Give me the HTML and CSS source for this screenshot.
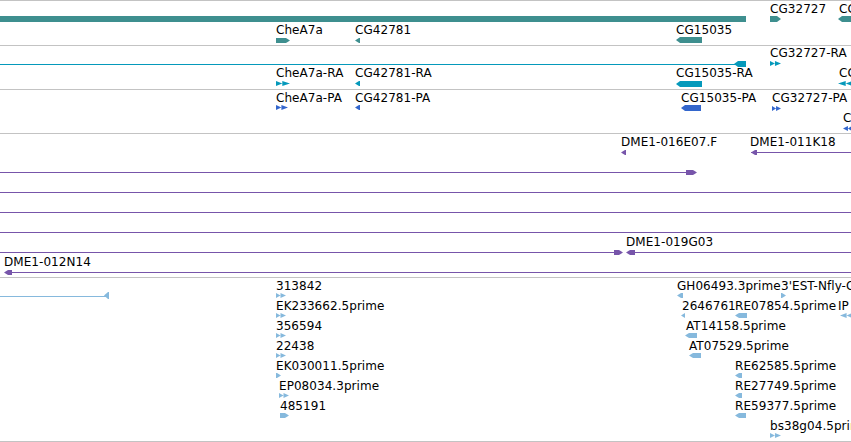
FILE: index.html
```html
<!DOCTYPE html>
<html lang="en">
<head>
  <meta charset="UTF-8">
  <title>Genome view</title>
  <link rel="stylesheet" href="styles.css">
</head>
<body>
<div class="view">

  <!-- genes -->
  <div class="track genes" style="height:44px">
    <div class="g flat" style="left:0;top:15px;width:746px;height:6px"></div>
    <span class="lbl" style="left:276px;top:22px">CheA7a</span>
    <div class="g fwd" style="left:276px;top:37px;width:14px"></div>
    <span class="lbl" style="left:355px;top:22px">CG42781</span>
    <div class="g rev" style="left:355px;top:37px;width:5px"></div>
    <span class="lbl" style="left:676px;top:22px">CG15035</span>
    <div class="g rev" style="left:676px;top:36px;width:26px;height:6px"></div>
    <span class="lbl" style="left:770px;top:1px">CG32727</span>
    <div class="g fwd" style="left:770px;top:15px;width:11px;height:6px"></div>
    <span class="lbl" style="left:839px;top:1px">CG32727</span>
    <div class="g rev" style="left:838px;top:15px;width:14px;height:6px"></div>
  </div>

  <!-- transcripts -->
  <div class="track transcripts" style="height:43px">
    <div class="line" style="left:0;top:18px;width:740px"></div>
    <div class="g rev" style="left:734px;top:15px;width:12px;height:6px"></div>
    <span class="lbl" style="left:276px;top:20px">CheA7a-RA</span>
    <div class="g dfwd" style="left:276px;top:35px;width:14px"></div>
    <span class="lbl" style="left:355px;top:20px">CG42781-RA</span>
    <div class="g rev" style="left:355px;top:35px;width:5px"></div>
    <span class="lbl" style="left:676px;top:20px">CG15035-RA</span>
    <div class="g rev" style="left:676px;top:35px;width:26px;height:6px"></div>
    <span class="lbl" style="left:770px;top:0">CG32727-RA</span>
    <div class="g dfwd" style="left:770px;top:15px;width:11px"></div>
    <span class="lbl" style="left:839px;top:20px">CG32727-RB</span>
    <div class="g drev" style="left:838px;top:35px;width:14px"></div>
  </div>

  <!-- proteins -->
  <div class="track proteins" style="height:43px">
    <span class="lbl" style="left:276px;top:1px">CheA7a-PA</span>
    <div class="g dfwd" style="left:276px;top:15px;width:12px"></div>
    <span class="lbl" style="left:355px;top:1px">CG42781-PA</span>
    <div class="g rev" style="left:355px;top:15px;width:5px"></div>
    <span class="lbl" style="left:681px;top:1px">CG15035-PA</span>
    <div class="g rev" style="left:681px;top:15px;width:20px;height:6px"></div>
    <span class="lbl" style="left:772px;top:1px">CG32727-PA</span>
    <div class="g dfwd" style="left:772px;top:16px;width:9px"></div>
    <span class="lbl" style="left:843px;top:21px">CG32727-PB</span>
    <div class="g drev" style="left:843px;top:36px;width:9px"></div>
  </div>

  <!-- BAC clones -->
  <div class="track clones" style="height:143px">
    <span class="lbl" style="left:621px;top:1px">DME1-016E07.F</span>
    <div class="g rev" style="left:621px;top:16px;width:5px"></div>
    <span class="lbl" style="left:750px;top:1px">DME1-011K18</span>
    <div class="line" style="left:751px;top:18px;width:101px"></div>
    <div class="g rev" style="left:751px;top:16px;width:6px"></div>

    <div class="line" style="left:0;top:38px;width:690px"></div>
    <div class="g fwd" style="left:686px;top:36px;width:11px"></div>

    <div class="line" style="left:0;top:58px;width:851px"></div>
    <div class="line" style="left:0;top:78px;width:851px"></div>
    <div class="line" style="left:0;top:98px;width:851px"></div>

    <span class="lbl" style="left:626px;top:101px">DME1-019G03</span>
    <div class="line" style="left:0;top:118px;width:618px"></div>
    <div class="g fwd" style="left:614px;top:116px;width:9px"></div>
    <div class="g rev" style="left:626px;top:116px;width:9px"></div>
    <div class="line" style="left:630px;top:118px;width:222px"></div>

    <span class="lbl" style="left:4px;top:121px">DME1-012N14</span>
    <div class="line" style="left:6px;top:138px;width:846px"></div>
    <div class="g rev" style="left:4px;top:136px;width:8px"></div>
  </div>

  <!-- ESTs -->
  <div class="track ests" style="height:163px">
    <div class="line" style="left:0;top:18px;width:106px"></div>
    <div class="g rev" style="left:104px;top:14px;width:5px;height:7px"></div>

    <span class="lbl" style="left:276px;top:1px">313842</span>
    <div class="g dfwd" style="left:276px;top:15px;width:10px"></div>
    <span class="lbl" style="left:276px;top:21px">EK233662.5prime</span>
    <div class="g dfwd" style="left:276px;top:35px;width:10px"></div>
    <span class="lbl" style="left:276px;top:41px">356594</span>
    <div class="g dfwd" style="left:276px;top:55px;width:10px"></div>
    <span class="lbl" style="left:276px;top:61px">22438</span>
    <div class="g dfwd" style="left:276px;top:75px;width:10px"></div>
    <span class="lbl" style="left:276px;top:81px">EK030011.5prime</span>
    <div class="g fwd" style="left:276px;top:95px;width:5px"></div>
    <span class="lbl" style="left:279px;top:101px">EP08034.3prime</span>
    <div class="g dfwd" style="left:279px;top:115px;width:10px"></div>
    <span class="lbl" style="left:280px;top:121px">485191</span>
    <div class="g fwd" style="left:280px;top:135px;width:9px"></div>

    <span class="lbl" style="left:677px;top:1px">GH06493.3prime</span>
    <div class="g rev" style="left:677px;top:15px;width:6px"></div>
    <span class="lbl" style="left:781px;top:1px">3'EST-Nfly-C</span>
    <div class="g fwd" style="left:781px;top:15px;width:5px"></div>
    <span class="lbl" style="left:682px;top:21px">2646761</span>
    <div class="g rev" style="left:681px;top:35px;width:4px"></div>
    <span class="lbl" style="left:735px;top:21px">RE07854.5prime</span>
    <div class="g rev" style="left:735px;top:35px;width:12px"></div>
    <span class="lbl" style="left:838px;top:21px">IP</span>
    <div class="g drev" style="left:840px;top:35px;width:12px"></div>
    <span class="lbl" style="left:686px;top:41px">AT14158.5prime</span>
    <div class="g rev" style="left:685px;top:55px;width:12px"></div>
    <span class="lbl" style="left:689px;top:61px">AT07529.5prime</span>
    <div class="g rev" style="left:689px;top:75px;width:12px"></div>
    <span class="lbl" style="left:735px;top:81px">RE62585.5prime</span>
    <div class="g rev" style="left:735px;top:95px;width:7px"></div>
    <span class="lbl" style="left:735px;top:101px">RE27749.5prime</span>
    <div class="g rev" style="left:735px;top:115px;width:7px"></div>
    <span class="lbl" style="left:735px;top:121px">RE59377.5prime</span>
    <div class="g rev" style="left:735px;top:135px;width:11px"></div>
    <span class="lbl" style="left:770px;top:141px">bs38g04.5prime</span>
    <div class="g dfwd" style="left:770px;top:155px;width:11px"></div>
  </div>

</div>
</body>
</html>
```

FILE: styles.css
```css
html,body{
    margin:0;
    background:#fff;
}
.view{
    width:851px;
    height:442px;
    overflow:hidden;
    border-top:1px solid #c3c3c3;
    box-sizing:border-box;
    font-family:"DejaVu Sans", sans-serif;
    font-size:12px;
    letter-spacing:0.05px;
    color:#000;
}
.track{
    position:relative;
    overflow:hidden;
    border-bottom:1px solid #c3c3c3;
}

/* feature labels and glyphs sit at their genome coordinate */
.lbl{
    position:absolute;
    white-space:nowrap;
    line-height:14px;
}
.g{
    position:absolute;
    height:5px;
}
.line{
    position:absolute;
    height:1px;
}

.fwd{
    clip-path:polygon(0 0, calc(100% - 4px) 0, 100% 50%, calc(100% - 4px) 100%, 0 100%);
}
.rev{
    clip-path:polygon(4px 0, 100% 0, 100% 100%, 4px 100%, 0 50%);
}
.dfwd{
    clip-path:polygon(0 0, 45% 50%, 45% 0, 100% 50%, 45% 100%, 45% 50%, 0 100%);
}
.drev{
    clip-path:polygon(100% 0, 55% 50%, 55% 0, 0 50%, 55% 100%, 55% 50%, 100% 100%);
}

.genes .g,.genes .line{ background:#3e8f8f; }
.transcripts .g,.transcripts .line{ background:#0599bb; }
.proteins .g{ background:#3366cc; }
.clones .g,.clones .line{ background:#7755aa; }
.ests .g,.ests .line{ background:#86b9dd; }
```
